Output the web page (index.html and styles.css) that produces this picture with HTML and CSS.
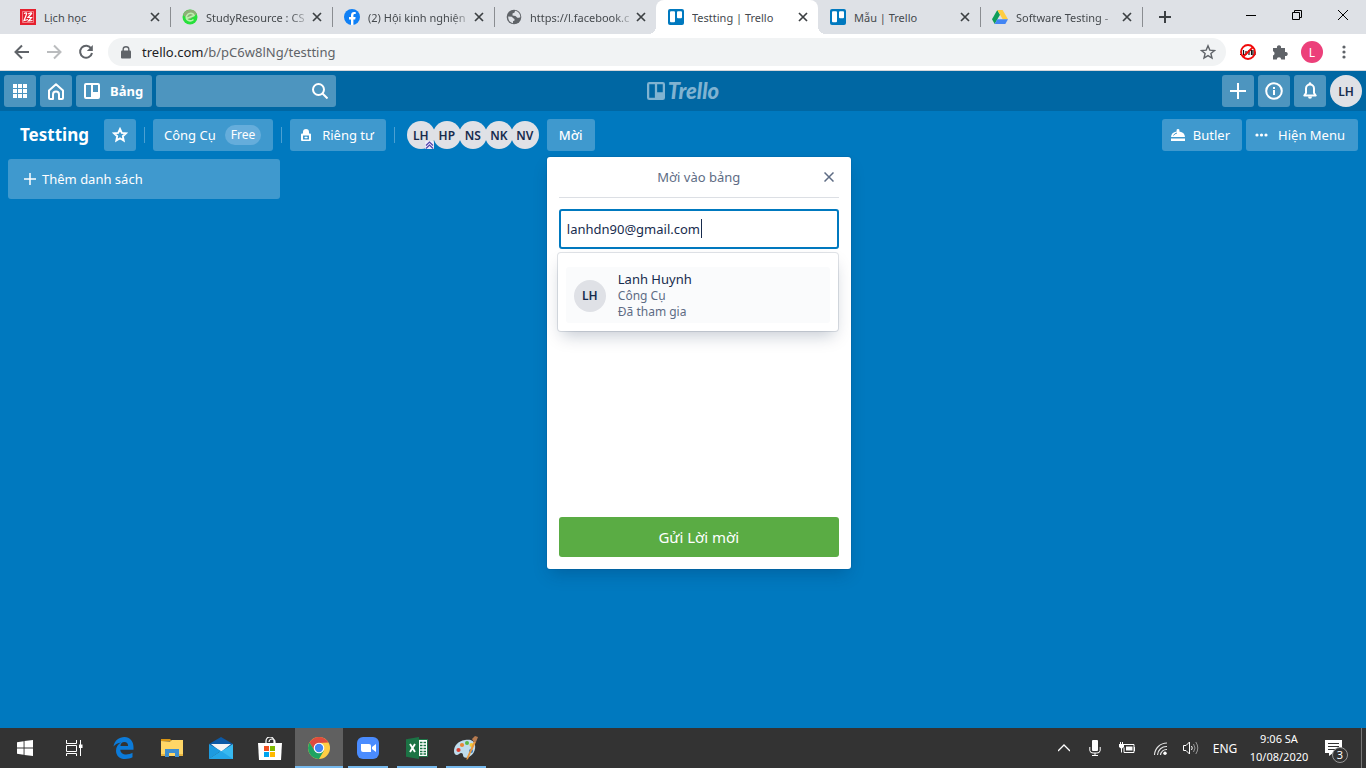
FILE: index.html
```html
<!DOCTYPE html>
<html lang="vi">
<head>
<meta charset="utf-8">
<title>Testting | Trello</title>
<link rel="stylesheet" href="styles.css">
</head>
<body>
<svg class="defs" width="0" height="0" aria-hidden="true">
  <symbol id="x" viewBox="0 0 10 10"><path d="M1 1l8 8M9 1L1 9" fill="none" stroke="currentColor" stroke-width="1.7"/></symbol>
  <symbol id="trello" viewBox="0 0 16 16"><rect width="16" height="16" rx="2" fill="#0079bf"/><rect x="2" y="2.200" width="5" height="11" rx="1" fill="#fff"/><rect x="9" y="2.200" width="5" height="7" rx="1" fill="#fff"/></symbol>
  <symbol id="plus" viewBox="0 0 16 16"><path d="M8 0v16M0 8h16" fill="none" stroke="currentColor" stroke-width="2"/></symbol>
  <symbol id="board" viewBox="0 0 16 16"><path fill="currentColor" fill-rule="evenodd" d="M2 0h12a2 2 0 0 1 2 2v12a2 2 0 0 1-2 2H2a2 2 0 0 1-2-2V2a2 2 0 0 1 2-2zM2 2v12h5V2zM9 2v7h5V2z"/></symbol>
</svg>

<header class="browser">
  <div class="tabstrip">
    <nav class="tabs" aria-label="Tabs">
      <div class="tab">
        <svg class="fav" viewBox="0 0 16 16"><rect width="16" height="16" fill="#e5202e"/><path d="M2.500 2.500h11v11h-11z" fill="none" stroke="#f7a5aa" stroke-width=".7"/><path d="M4 4.500q3-1.500 2.500.5T4 11.500l4-1M8 5l3.500-1.500M12 4L8 8.500h3.500L8.500 12l4-.5" fill="none" stroke="#fff" stroke-width="1.200"/></svg>
        <a class="tab-title" href="#">Lịch học</a>
        <button class="tab-close" aria-label="Close tab"><svg viewBox="0 0 10 10"><use href="#x"/></svg></button>
      </div>
      <div class="tab">
        <svg class="fav" viewBox="0 0 16 16"><circle cx="8" cy="8" r="7.500" fill="#27e03b"/><path d="M1 6a7.500 7.500 0 0 1 14-1L7 11z" fill="#8fae78"/><path d="M4.500 9.500L12 6.500C11 3.500 6.500 3.500 4.700 6.800 3 11 8 13.500 11.500 10.500" fill="none" stroke="#b9f2ac" stroke-width="1.600"/></svg>
        <a class="tab-title fade" href="#">StudyResource : CS</a>
        <button class="tab-close" aria-label="Close tab"><svg viewBox="0 0 10 10"><use href="#x"/></svg></button>
      </div>
      <div class="tab">
        <svg class="fav" viewBox="0 0 16 16"><circle cx="8" cy="8" r="8" fill="#1080f5"/><path d="M7 16v-5.600H5V8h2V6.300C7 4.200 8.200 3 10.100 3l1.600.1v2h-1c-1 0-1.300.6-1.300 1.300V8h2.200l-.4 2.400H9.400V16z" fill="#fff"/></svg>
        <a class="tab-title fade" href="#">(2) Hội kinh nghiện</a>
        <button class="tab-close" aria-label="Close tab"><svg viewBox="0 0 10 10"><use href="#x"/></svg></button>
      </div>
      <div class="tab">
        <svg class="fav" viewBox="0 0 16 16"><circle cx="8" cy="8" r="7.300" fill="#5f6368"/><path d="M2.200 7.500l3.600.2 1.500 1.500L8.500 10v1.500L7 12.200v2C4 13.500 2 11 2.200 7.500zM9 1.800L8.600 3.500 6.500 4.500v2l3 .6 1.800 1.700h1.600l1.400-.5C14.500 5 12 2.200 9 1.800z" fill="#dee1e6"/></svg>
        <a class="tab-title fade" href="#">https://l.facebook.c</a>
        <button class="tab-close" aria-label="Close tab"><svg viewBox="0 0 10 10"><use href="#x"/></svg></button>
      </div>
      <div class="tab active">
        <svg class="fav" viewBox="0 0 16 16"><use href="#trello"/></svg>
        <a class="tab-title" href="#">Testting | Trello</a>
        <button class="tab-close" aria-label="Close tab"><svg viewBox="0 0 10 10"><use href="#x"/></svg></button>
      </div>
      <div class="tab">
        <svg class="fav" viewBox="0 0 16 16"><use href="#trello"/></svg>
        <a class="tab-title" href="#">Mẫu | Trello</a>
        <button class="tab-close" aria-label="Close tab"><svg viewBox="0 0 10 10"><use href="#x"/></svg></button>
      </div>
      <div class="tab">
        <svg class="fav" viewBox="0 0 16 16"><path d="M5.300 1L0 10.300 2.700 15 8 5.700z" fill="#0f9d58"/><path d="M5.300 1h5.300L16 10.300h-5.300z" fill="#ffcd40"/><path d="M5.400 10.300H16L13.300 15H2.700z" fill="#4285f4"/></svg>
        <a class="tab-title fade" href="#">Software Testing -</a>
        <button class="tab-close" aria-label="Close tab"><svg viewBox="0 0 10 10"><use href="#x"/></svg></button>
      </div>
    </nav>
    <button class="new-tab" aria-label="New tab"><svg width="12" height="12" viewBox="0 0 12 12"><path d="M6 0v12M0 6h12" stroke="#3c4043" stroke-width="2"/></svg></button>
    <div class="window-controls">
      <button aria-label="Minimize"><svg width="10" height="10" viewBox="0 0 10 10"><path d="M0 5.500h10" stroke="#000"/></svg></button>
      <button aria-label="Restore"><svg width="10" height="10" viewBox="0 0 10 10"><path d="M.5 2.500h7v7h-7zM2.500 2.500v-2h7v7h-2" fill="none" stroke="#000"/></svg></button>
      <button aria-label="Close"><svg width="10" height="10" viewBox="0 0 10 10"><path d="M0 0l10 10M10 0L0 10" stroke="#000"/></svg></button>
    </div>
  </div>
  <div class="toolbar">
    <button aria-label="Back"><svg width="16" height="16" viewBox="0 0 16 16"><path d="M15 8H2M8 1.500L1.500 8 8 14.500" fill="none" stroke="#5f6368" stroke-width="2"/></svg></button>
    <button aria-label="Forward"><svg width="16" height="16" viewBox="0 0 16 16"><path d="M1 8h13M8 1.500L14.500 8 8 14.500" fill="none" stroke="#babcbe" stroke-width="2"/></svg></button>
    <button aria-label="Reload"><svg width="16" height="16" viewBox="0 0 16 16"><path d="M13.200 4.500A6 6 0 1 0 14 9" fill="none" stroke="#5f6368" stroke-width="2"/><path d="M14.800 1v6H8.800z" fill="#5f6368"/></svg></button>
    <div class="address">
      <svg width="10" height="13" viewBox="0 0 10 13"><rect y="4.500" width="10" height="8" rx="1" fill="#5f6368"/><path d="M2.200 5V3a2.800 2.300 0 0 1 5.600 0v2" fill="none" stroke="#5f6368" stroke-width="1.400"/></svg>
      <a class="url" href="#"><span>trello.com</span>/b/pC6w8lNg/testting</a>
      <button aria-label="Bookmark"><svg width="16" height="16" viewBox="0 0 16 16"><path d="M8 1.800l1.800 4.300 4.700.4-3.600 3 1.100 4.600-4-2.500-4 2.500 1.100-4.600-3.600-3 4.700-.4z" fill="none" stroke="#5f6368" stroke-width="1.400"/></svg></button>
    </div>
    <div class="extensions">
      <button aria-label="Blocker extension"><svg width="16" height="16" viewBox="0 0 16 16"><circle cx="8" cy="8" r="7" fill="#fff"/><path d="M0 10.500h2M3.500 6v4.500h2.500V7M9 11V6.500h2.500V11M13 6v5h2M15 8v3" fill="none" stroke="#111" stroke-width="1.200"/><circle cx="8" cy="8" r="7" fill="none" stroke="#f00a0a" stroke-width="1.800"/><path d="M3 13L13 3" stroke="#f00a0a" stroke-width="1.800"/></svg></button>
      <button aria-label="Extensions"><svg width="16" height="16" viewBox="0 0 16 16"><path d="M1 4h4a2.100 2.100 0 1 1 4 0h4v4a2.100 2.100 0 1 1 0 4v3.500H9.200a2.200 2.200 0 0 0-4.400 0H1v-4a2.200 2.200 0 0 0 0-4.200z" fill="#5f6368"/></svg></button>
      <button class="profile" aria-label="Profile">L</button>
      <button aria-label="Chrome menu"><svg width="4" height="14" viewBox="0 0 4 14"><g fill="#5f6368"><circle cx="2" cy="2" r="1.600"/><circle cx="2" cy="7" r="1.600"/><circle cx="2" cy="12" r="1.600"/></g></svg></button>
    </div>
  </div>
</header>

<main class="trello">
  <div class="app-header">
    <div class="group">
      <button class="hbtn square" aria-label="Apps"><svg width="14" height="14" viewBox="0 0 14 14"><path d="M0 0h4v4H0zM5 0h4v4H5zM10 0h4v4h-4zM0 5h4v4H0zM5 5h4v4H5zM10 5h4v4h-4zM0 10h4v4H0zM5 10h4v4H5zM10 10h4v4h-4z" fill="#fff"/></svg></button>
      <button class="hbtn square" aria-label="Home"><svg width="16" height="17" viewBox="0 0 16 17"><path d="M1 7.500L8 1.200l7 6.300V15a1 1 0 0 1-1 1h-3v-4.500a3 3 0 0 0-6 0V16H2a1 1 0 0 1-1-1z" fill="none" stroke="#fff" stroke-width="2" stroke-linejoin="round"/></svg></button>
      <button class="hbtn boards"><svg width="16" height="16"><use href="#board"/></svg>Bảng</button>
      <div class="search"><input type="search" aria-label="Search"><svg width="16" height="16" viewBox="0 0 16 16"><circle cx="6.500" cy="6.500" r="5.500" fill="none" stroke="#fff" stroke-width="2"/><path d="M10.500 10.500l5 5" stroke="#fff" stroke-width="2"/></svg></div>
    </div>
    <a class="logo" href="#"><svg width="18" height="18" viewBox="0 0 16 16"><use href="#board"/></svg><span>Trello</span></a>
    <div class="group end">
      <button class="hbtn square" aria-label="Create"><svg width="16" height="16"><use href="#plus"/></svg></button>
      <button class="hbtn square" aria-label="Information"><svg width="18" height="18" viewBox="0 0 18 18"><circle cx="9" cy="9" r="7.800" fill="none" stroke="#fff" stroke-width="2"/><path d="M9 8v5M9 5v2" stroke="#fff" stroke-width="2"/></svg></button>
      <button class="hbtn square" aria-label="Notifications"><svg width="14" height="18" viewBox="0 0 14 18"><path d="M1.300 13.500L3 11V6.500a4 4 0 0 1 8 0V11l1.700 2.500z" fill="none" stroke="#fff" stroke-width="2" stroke-linejoin="round"/><path d="M5 14.500a2 2.200 0 0 0 4 0z" fill="#fff"/><circle cx="7" cy="1.500" r="1.200" fill="#fff"/></svg></button>
      <button class="avatar large">LH</button>
    </div>
  </div>

  <div class="board-header">
    <h1>Testting</h1>
    <button class="bbtn square" aria-label="Star board"><svg width="16" height="16" viewBox="0 0 16 16"><path d="M8 2l1.800 3.900 4.200.4-3.200 2.900.9 4.300L8 11.300l-3.700 2.200.9-4.300L2 6.300l4.200-.4z" fill="none" stroke="#fff" stroke-width="1.900"/></svg></button>
    <i class="divider"></i>
    <button class="bbtn team">Công Cụ<span class="plan">Free</span></button>
    <i class="divider"></i>
    <button class="bbtn privacy"><svg width="10" height="12" viewBox="0 0 10 12"><path fill="#fff" fill-rule="evenodd" d="M1 4.500h1V3a3 3 0 0 1 6 0v1.500h1a1 1 0 0 1 1 1V11a1 1 0 0 1-1 1H1a1 1 0 0 1-1-1V5.500a1 1 0 0 1 1-1zM2 6.500v4h6v-4z"/><path d="M3.500 8.500h3M5 7.500v2" stroke="#fff"/></svg>Riêng tư</button>
    <i class="divider"></i>
    <div class="members">
      <button class="avatar">LH<svg class="admin" width="9" height="8" viewBox="0 0 9 8"><rect width="9" height="8" rx="1" fill="#eceaf8"/><path d="M1 4.500L4.500 1 8 4.500M1 7.500L4.500 4 8 7.500" fill="none" stroke="#5243aa" stroke-width="1.200"/></svg></button>
      <button class="avatar">HP</button>
      <button class="avatar">NS</button>
      <button class="avatar">NK</button>
      <button class="avatar">NV</button>
    </div>
    <div class="invite">
      <button class="bbtn invite-btn">Mời</button>
      <form class="popover" aria-labelledby="pop-title" onsubmit="return false">
        <div class="pop-head">
          <h2 id="pop-title">Mời vào bảng</h2>
          <button type="button" aria-label="Close"><svg width="10" height="10" viewBox="0 0 10 10"><path d="M.5 .5l9 9M9.500 .5l-9 9" stroke="#5e6c84" stroke-width="1.500"/></svg></button>
        </div>
        <div class="field">
          <input class="email" type="text" aria-label="Email" value="lanhdn90@gmail.com">
          <i class="caret"></i>
          <div class="results">
            <button type="button" class="person">
              <span class="avatar large">LH</span>
              <span class="who"><b>Lanh Huynh</b><span>Công Cụ</span><span>Đã tham gia</span></span>
            </button>
          </div>
        </div>
        <button class="send">Gửi Lời mời</button>
      </form>
    </div>
    <div class="right">
      <button class="bbtn butler"><svg width="14" height="12" viewBox="0 0 14 12"><path d="M0 8a7 6 0 0 1 5.600-5.600V1a1.400 1 0 0 1 2.800 0v1.400A7 6 0 0 1 14 8zM0 9.500h14V12H0z" fill="#fff"/><path d="M2.500 6.500A5 4 0 0 1 6 4" stroke="#3f99ce" fill="none"/></svg>Butler</button>
      <button class="bbtn menu"><svg width="13" height="4" viewBox="0 0 13 4"><g fill="#fff"><circle cx="2" cy="2" r="1.600"/><circle cx="6.500" cy="2" r="1.600"/><circle cx="11" cy="2" r="1.600"/></g></svg>Hiện Menu</button>
    </div>
  </div>

  <div class="lists">
    <button class="add-list"><svg width="12" height="12" viewBox="0 0 12 12"><path d="M6 0v12M0 6h12" stroke="#fff" stroke-width="1.500"/></svg>Thêm danh sách</button>
  </div>
</main>

<footer class="taskbar">
  <div class="apps">
    <button aria-label="Start"><svg width="16" height="16" viewBox="0 0 16 16"><path d="M0 2.300L6.600 1.300V7.500H0zM7.500 1.100L16 0v7.500H7.500zM0 8.500h6.600v6.200L0 13.700zM7.500 8.500H16V16l-8.500-1.100z" fill="#fff"/></svg></button>
    <button aria-label="Task view"><svg width="17" height="16" viewBox="0 0 17 16"><path d="M.5 0v3.500h10V0M.5 5.500h10v6H.5zM.5 16v-2.500h10V16M14.500 0v16" fill="none" stroke="#fff"/><path d="M13 4.500h3.500v3.500H13z" fill="#fff"/></svg></button>
    <button aria-label="Edge"><svg width="21" height="22" viewBox="0 0 21 22"><path d="M.5 9.500C1.500 3.500 6 0 11.500 0 17 0 20.500 4.500 20.500 10v2.700H7.300c.1 3 2.500 4.800 6 4.800 2.300 0 4.300-.5 6.200-1.700v4.500c-2 1.200-4.400 1.700-7.300 1.700C6.500 22 3 18.600 3 13.700c0-3.700 2-6.700 5.300-8.100C5 6 2.300 7.300.5 9.500zM7.400 9h7.700c0-2.500-1.300-4-3.700-4S7.700 6.500 7.400 9z" fill="#0c7bd9"/></svg></button>
    <button aria-label="File Explorer"><svg width="22" height="18" viewBox="0 0 22 18"><path d="M0 0h9l2 2H0z" fill="#d99514"/><path d="M0 2l9 .5L11 1h11v16H0z" fill="#ffd666"/><path d="M4 10h14v8h-4v-4H8v4H4z" fill="#3d8ed0"/><path d="M0 15h4v2H0zM18 15h4v2h-4z" fill="#e6b441"/></svg></button>
    <button aria-label="Mail"><svg width="24" height="22" viewBox="0 0 24 22"><path d="M0 7L12 0l12 7-12 8z" fill="#0c59a5"/><path d="M2 7h20L12 15z" fill="#f5f5f5"/><path d="M0 7l12 7-12 8z" fill="#1d9be0"/><path d="M0 22L24 7v15z" fill="#38b9f0"/><path d="M12 14l12 8H0z" fill="#24a6e8"/></svg></button>
    <button aria-label="Store"><svg width="24" height="23" viewBox="0 0 24 23"><path d="M8 7V4a4 4 0 0 1 8 0v3M11 5a3 3 0 0 1 6 0v2" fill="none" stroke="#fff" stroke-width="1.200"/><path d="M0 6h24l-1 17H1z" fill="#fff"/><path d="M6 9h5v5H6z" fill="#f25022"/><path d="M12 9h5v5h-5z" fill="#7fba00"/><path d="M6 15h5v5H6z" fill="#00a4ef"/><path d="M12 15h5v5h-5z" fill="#ffb900"/></svg></button>
    <button class="running current" aria-label="Chrome"><svg width="22" height="22" viewBox="0 0 22 22"><circle cx="11" cy="11" r="11" fill="#ffce44"/><path d="M1.500 5.500A11 11 0 0 1 20.500 5.500L11 6 6.500 14z" fill="#dd4b3e"/><path d="M1.500 5.500A11 11 0 0 0 11 22l5-8.500-9.500 0z" fill="#1ea362"/><circle cx="11" cy="11" r="5.300" fill="#fff"/><circle cx="11" cy="11" r="4.200" fill="#4285f4"/></svg></button>
    <button class="running" aria-label="Zoom"><svg width="22" height="22" viewBox="0 0 22 22"><rect width="22" height="22" rx="6" fill="#4a8cff"/><path d="M4 7h8a2 2 0 0 1 2 2v6H6a2 2 0 0 1-2-2zM15 10l4-3v8l-4-3z" fill="#fff"/></svg></button>
    <button class="running" aria-label="Excel"><svg width="22" height="22" viewBox="0 0 22 22"><path d="M12 2.500h9.500v17H12z" fill="#fff" stroke="#1c7345"/><path d="M14 5.500h6M14 8.500h6M14 11.500h6M14 14.500h6M14 17h6" stroke="#1c7345" stroke-width="1.500"/><path d="M17 3v16" stroke="#fff"/><path d="M0 2.300L13 0v22L0 19.700z" fill="#1c7345"/><path d="M4 7l5 8M9 7l-5 8" stroke="#fff" stroke-width="1.900"/></svg></button>
    <button class="running" aria-label="Paint"><svg width="24" height="24" viewBox="0 0 24 24"><path d="M11 4C4 5 0 10 0 15c0 4 3 5 5 3s4-1 4 1 2 4 6 2 7-7 6-12-5-6-10-5z" fill="#bfdcec"/><circle cx="4.500" cy="14" r="2.100" fill="#da3d30"/><circle cx="8" cy="9" r="2.100" fill="#e88636"/><circle cx="13" cy="7" r="2" fill="#58b947"/><circle cx="17.500" cy="9" r="2" fill="#f3ca37"/><circle cx="17" cy="15" r="2" fill="#2f79c5"/><path d="M20 5l2 1-8 17-1.500 1 .3-2.500z" fill="#e9983e"/><path d="M18 3l3-3 3 1-2 5-2.500-.5z" fill="#b77b50"/></svg></button>
  </div>
  <div class="tray">
    <button class="t-chev" aria-label="Show hidden icons"><svg width="12" height="8" viewBox="0 0 12 8"><path d="M0 7l6-6 6 6" fill="none" stroke="#fff" stroke-width="1.300"/></svg></button>
    <button class="t-mic" aria-label="Microphone"><svg width="12" height="16" viewBox="0 0 12 16"><rect x="3" width="6" height="11" rx="1" fill="#fff"/><path d="M.8 7v3.500A3 3 0 0 0 4 13h4a3 3 0 0 0 3.200-2.500V7M6 13v2.500M3 15.500h6" fill="none" stroke="#fff"/></svg></button>
    <button class="t-bat" aria-label="Battery"><svg width="17" height="12" viewBox="0 0 17 12"><path d="M5 2.500h10v8H5v-5M15.500 5v4" fill="none" stroke="#fff"/><path d="M7 4.500h6.500v4H7zM0 2h5v3L3 6.500v4H2v-4L0 5zM1 0h1v2H1zM3 0h1v2H3z" fill="#fff"/></svg></button>
    <button class="t-wifi" aria-label="Wi-Fi"><svg width="13" height="13" viewBox="0 0 13 13"><path d="M.5 13A12.500 12.500 0 0 1 13 1M3.500 13A9 9 0 0 1 13 4.500M6.500 13A6 6 0 0 1 13 7.500" fill="none" stroke="#e5e5e5" stroke-width="1.100"/><circle cx="11" cy="11.300" r="1.700" fill="#fff"/></svg></button>
    <button class="t-vol" aria-label="Volume"><svg width="16" height="14" viewBox="0 0 16 14"><path d="M.5 4.500H3L6.500 1v12L3 9.500H.5zM8.500 5q1.500 2 0 4" fill="none" stroke="#fff"/><path d="M10.500 3q3 4 0 8M12.800 1q4 6 0 12" fill="none" stroke="#999"/></svg></button>
    <button class="lang">ENG</button>
    <button class="clock"><time>9:06 SA</time><time>10/08/2020</time></button>
    <button class="notes" aria-label="Notifications, 3"><svg width="17" height="16" viewBox="0 0 17 16"><path d="M0 0h17v13H8l-4 3v-3H0z" fill="#fff"/><path d="M3 3.500h11M3 6.500h11M3 9.500h7" stroke="#333"/></svg><span>3</span></button>
    <button class="desktop" aria-label="Show desktop"></button>
  </div>
</footer>
</body>
</html>
```
FILE: styles.css
```css
* { box-sizing: border-box; }
body {
  margin: 0;
  min-height: 100vh;
  display: flex;
  flex-direction: column;
  font-family: "Noto Sans", "Open Sans", sans-serif;
  font-size: 13px;
  color: #172b4d;
}
button {
  margin: 0;
  padding: 0;
  border: 0;
  background: none;
  font: inherit;
  color: inherit;
  display: flex;
  align-items: center;
  justify-content: center;
  white-space: nowrap;
  flex: none;
}
a { color: inherit; text-decoration: none; }
svg { flex: none; display: block; }
.defs { position: absolute; }

/* Browser chrome */
.tabstrip {
  display: flex;
  height: 34px;
  padding-left: 8px;
  background: #dee1e6;
}
.tabs { display: flex; flex: 0 1 1134px; min-width: 0; }
.tab {
  flex: 1 1 0;
  min-width: 0;
  display: flex;
  align-items: center;
  padding: 0 9px 0 12px;
  position: relative;
  font-size: 11px;
  color: #45494d;
}
.tab::after {
  content: "";
  position: absolute;
  right: -1px;
  top: 7px;
  height: 20px;
  border-right: 1px solid #8a8d91;
}
.tab.active { background: #fff; border-radius: 8px 8px 0 0; }
.tab.active::before, .tab.active::after {
  content: "";
  position: absolute;
  top: auto;
  bottom: 0;
  width: 8px;
  height: 8px;
  border: 0;
}
.tab.active::before { left: -8px; background: radial-gradient(circle at 0 0, #dee1e6 8px, #fff 8px); }
.tab.active::after { right: -8px; background: radial-gradient(circle at 100% 0, #dee1e6 8px, #fff 8px); }
.tab:has(+ .active)::after { display: none; }
.fav { width: 16px; height: 16px; margin-right: 8px; }
.tab-title {
  flex: 1;
  min-width: 0;
  overflow: hidden;
  white-space: nowrap;
}
.fade { mask-image: linear-gradient(to right, #000 80%, transparent); }
.tab-close { width: 12px; height: 16px; color: #3c4043; }
.tab-close svg { width: 10px; height: 10px; }
.new-tab { width: 28px; margin-left: 9px; }
.window-controls { display: flex; margin-left: auto; height: 29px; }
.window-controls button { width: 46px; }
.toolbar {
  display: flex;
  align-items: center;
  height: 37px;
  padding: 0 6px;
  background: #fff;
  border-bottom: 1px solid #d5d7da;
}
.toolbar > button { width: 32px; height: 28px; }
.address {
  flex: 1;
  display: flex;
  align-items: center;
  height: 28px;
  margin-left: 6px;
  padding: 0 10px 0 13px;
  border-radius: 14px;
  background: #f1f3f4;
}
.url { flex: 1; margin-left: 11px; color: #5f6368; font-size: 13px; }
.url span { color: #202124; }
.extensions { display: flex; align-items: center; margin-left: 6px; }
.extensions button { width: 32px; }
.extensions .profile {
  width: 22px;
  height: 22px;
  margin: 0 5px;
  border-radius: 50%;
  background: #ec407a;
  color: #fff;
  font-size: 12px;
}

/* Trello */
.trello { flex: 1; background: #0079bf; }
.app-header {
  display: grid;
  grid-template-columns: 1fr auto 1fr;
  align-items: center;
  height: 40px;
  padding: 0 4px;
  background: #0067a3;
}
.group { display: flex; gap: 4px; }
.end { justify-content: flex-end; }
.hbtn {
  height: 32px;
  border-radius: 3px;
  background: #4d95bf;
  color: #fff;
}
.square { width: 32px; }
.boards { padding: 0 9px 0 8px; gap: 10px; font-weight: 700; }
.search {
  flex: 0 1 180px;
  min-width: 0;
  display: flex;
  align-items: center;
  height: 32px;
  padding-right: 8px;
  border-radius: 3px;
  background: #4d95bf;
}
.search input {
  flex: 1;
  width: 100%;
  min-width: 0;
  height: 32px;
  padding: 0 8px;
  border: 0;
  background: none;
  color: #fff;
  outline: 0;
}
.logo { display: flex; align-items: center; gap: 3px; color: #80b3d1; }
.logo span {
  font-family: Lato, sans-serif;
  font-size: 22px;
  line-height: 24px;
  font-weight: 900;
  font-style: italic;
}
.avatar {
  display: flex;
  align-items: center;
  justify-content: center;
  position: relative;
  flex: none;
  width: 28px;
  height: 28px;
  border-radius: 50%;
  background: #dfe1e6;
  color: #172b4d;
  font-size: 12px;
  font-weight: 600;
}
.avatar.large { width: 32px; height: 32px; }
.board-header {
  display: flex;
  align-items: center;
  height: 48px;
  padding: 0 8px;
  color: #fff;
}
h1 { margin: 0 15px 0 12px; font-size: 17px; line-height: 32px; font-weight: 700; }
.bbtn {
  height: 32px;
  border-radius: 3px;
  background: #3f99ce;
  color: #fff;
}
.divider { height: 16px; margin: 0 8px; border-left: 1px solid #4ba0d2; }
.team { padding: 0 12px 0 11px; gap: 9px; }
.plan {
  padding: 0 6px;
  border-radius: 10px;
  background: #65addb;
  font-size: 12px;
  line-height: 20px;
}
.privacy { padding: 0 12px 0 11px; gap: 11px; }
.members { display: flex; margin: 0 8px 0 4px; }
.members .avatar + .avatar { margin-left: -2px; }
.admin { position: absolute; right: 1px; bottom: 0; }
.invite { position: relative; }
.invite-btn { padding: 0 12px; font-weight: 500; }
.right { display: flex; gap: 4px; margin-left: auto; }
.butler { padding: 0 12px 0 9px; gap: 8px; }
.menu { padding: 0 13px 0 9px; gap: 10px; }
.lists { padding: 0 8px; }
.add-list {
  justify-content: flex-start;
  gap: 6px;
  width: 272px;
  height: 40px;
  padding: 0 16px;
  border-radius: 3px;
  background: #3f99ce;
  color: #fff;
}

.popover {
  position: absolute;
  left: 0;
  top: 38px;
  width: 304px;
  padding: 0 12px 12px;
  border-radius: 3px;
  background: #fff;
  color: #172b4d;
  box-shadow: 0 8px 16px -4px #091e4240, 0 0 0 1px #091e4214;
}
.pop-head {
  display: flex;
  align-items: center;
  height: 41px;
  border-bottom: 1px solid #dcdfe4;
}
.pop-head h2 {
  flex: 1;
  margin: 0 0 0 20px;
  text-align: center;
  font-size: 13px;
  font-weight: 400;
  color: #5e6c84;
}
.pop-head button { width: 20px; height: 20px; }
.field { position: relative; margin-top: 11px; }
.email {
  display: block;
  width: 100%;
  height: 40px;
  padding: 0 6px;
  border: 2px solid #0079bf;
  border-radius: 3px;
  outline: 0;
  background: #fff;
  color: #172b4d;
  font: inherit;
}
.caret {
  position: absolute;
  left: 142px;
  top: 10px;
  height: 19px;
  border-left: 1px solid #172b4d;
}
.results {
  position: absolute;
  left: -1px;
  right: 1px;
  top: 44px;
  padding: 14px 8px 8px;
  border-radius: 3px;
  background: #fff;
  box-shadow: 0 8px 16px -4px #091e4240, 0 0 0 1px #091e421f;
}
.person {
  justify-content: flex-start;
  width: 100%;
  padding: 4px 8px 3px;
  gap: 12px;
  border-radius: 3px;
  background: #fafbfc;
  text-align: left;
}
.who { display: flex; flex-direction: column; font-size: 12px; line-height: 16px; color: #5e6c84; }
.who b { margin-bottom: 1px; font-size: 13px; font-weight: 400; color: #172b4d; }
.send {
  width: 100%;
  height: 40px;
  margin-top: 268px;
  border-radius: 3px;
  background: #5aac44;
  color: #fff;
  font-size: 15px;
}

/* Taskbar */
.taskbar {
  display: flex;
  justify-content: space-between;
  height: 40px;
  background: #333;
  color: #fff;
  font-size: 12px;
}
.apps, .tray { display: flex; }
.apps { gap: 1px; padding-left: 1px; }
.apps button { width: 48px; height: 40px; position: relative; }
.running::after {
  content: "";
  position: absolute;
  left: 4px;
  right: 4px;
  bottom: 0;
  height: 2px;
  background: #76b9ed;
}
.current { background: #606060; }
.current::after { left: 0; right: 0; }
.t-chev { width: 31px; }
.t-mic { width: 31px; }
.t-bat { width: 34px; }
.t-wifi { width: 32px; }
.t-vol { width: 30px; }
.lang { width: 38px; }
.clock { width: 70px; flex-direction: column; font-size: 11px; line-height: 18px; }
.notes { width: 47px; padding-right: 8px; position: relative; }
.notes span {
  position: absolute;
  left: 18px;
  top: 19px;
  width: 16px;
  height: 16px;
  border: 1px solid #999;
  border-radius: 50%;
  background: #333;
  font-size: 11px;
  line-height: 14px;
}
.desktop { width: 5px; border-left: 1px solid #777; }
```
